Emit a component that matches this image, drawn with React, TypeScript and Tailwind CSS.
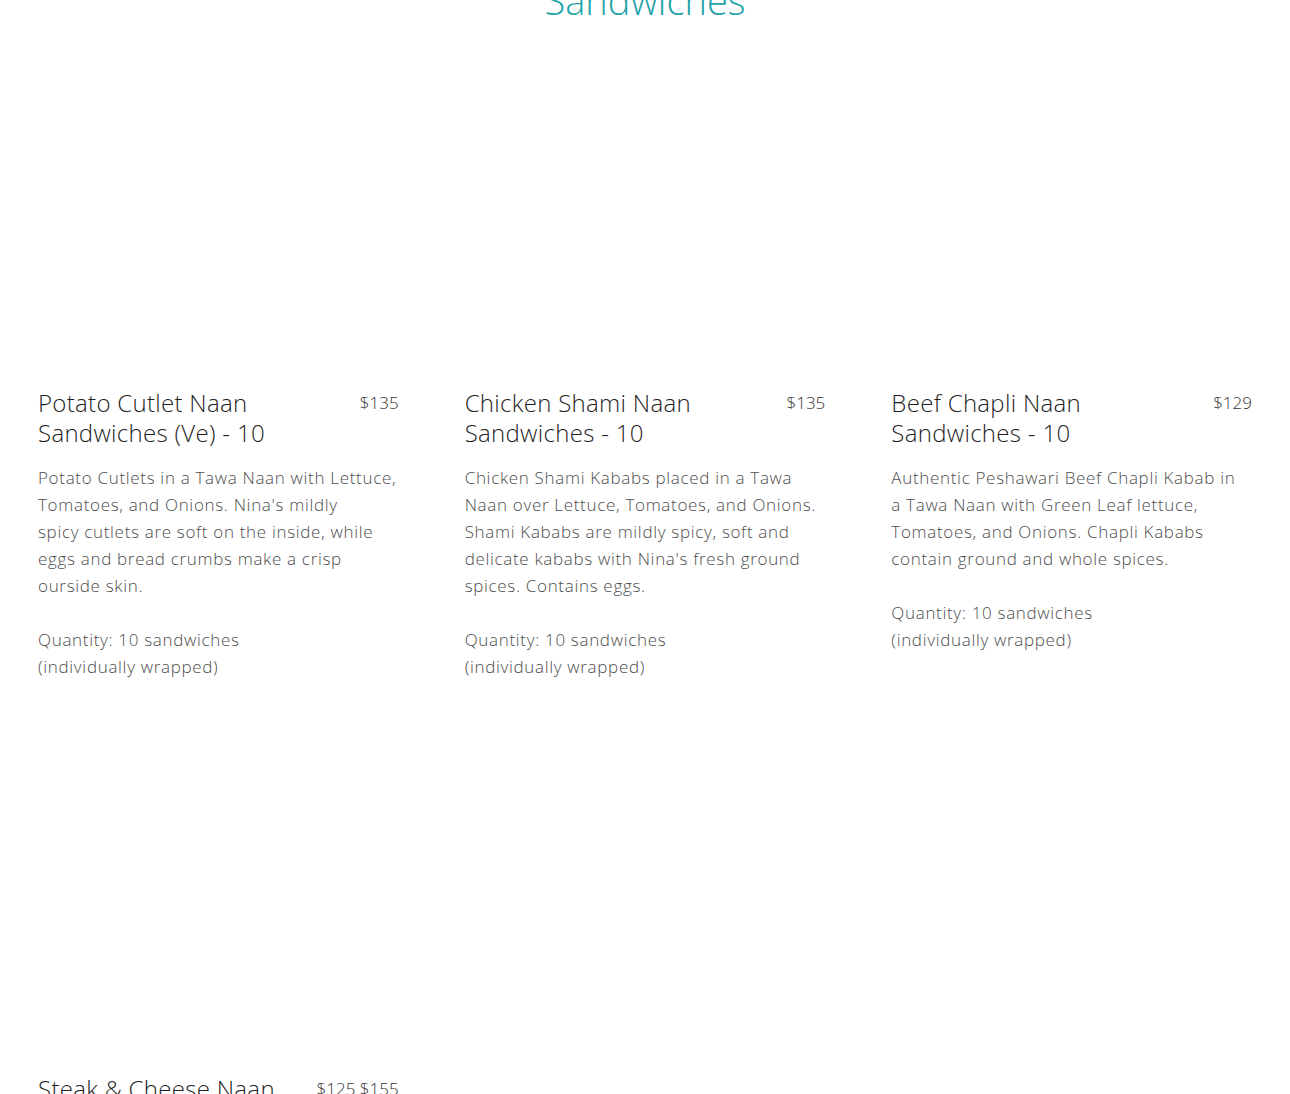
import React from "react";

type Item = { name: string[]; price: string; desc: string[]; qty: string[] };

const items: Item[] = [
  {
    name: ["Potato Cutlet Naan", "Sandwiches (Ve) - 10"],
    price: "$135",
    desc: [
      "Potato Cutlets in a Tawa Naan with Lettuce,",
      "Tomatoes, and Onions. Nina's mildly",
      "spicy cutlets are soft on the inside, while",
      "eggs and bread crumbs make a crisp",
      "ourside skin.",
    ],
    qty: ["Quantity: 10 sandwiches", "(individually wrapped)"],
  },
  {
    name: ["Chicken Shami Naan", "Sandwiches - 10"],
    price: "$135",
    desc: [
      "Chicken Shami Kababs placed in a Tawa",
      "Naan over Lettuce, Tomatoes, and Onions.",
      "Shami Kababs are mildly spicy, soft and",
      "delicate kababs with Nina's fresh ground",
      "spices. Contains eggs.",
    ],
    qty: ["Quantity: 10 sandwiches", "(individually wrapped)"],
  },
  {
    name: ["Beef Chapli Naan", "Sandwiches - 10"],
    price: "$129",
    desc: [
      "Authentic Peshawari Beef Chapli Kabab in",
      "a Tawa Naan with Green Leaf lettuce,",
      "Tomatoes, and Onions. Chapli Kababs",
      "contain ground and whole spices.",
    ],
    qty: ["Quantity: 10 sandwiches", "(individually wrapped)"],
  },
  {
    name: ["Steak & Cheese Naan", "Sandwiches - 10"],
    price: "$125 $155",
    desc: [],
    qty: [],
  },
];

const font = { fontFamily: "'Open Sans', Lato, sans-serif" };

function Card({ item }: { item: Item }) {
  return (
    <div className="flex flex-col">
      <div className="h-[340px] w-full bg-white" />
      <div className="mt-[20px] flex items-start justify-between gap-6">
        <h3 className="text-[24px] leading-[30px] font-light tracking-[0.3px] text-[#1f1f1f] whitespace-nowrap">
          {item.name.map((l, i) => (
            <div key={i}>{l}</div>
          ))}
        </h3>
        <div className="text-[17px] leading-[30px] font-light text-[#333333] whitespace-nowrap">{item.price}</div>
      </div>
      {item.desc.length > 0 && (
        <div className="mt-[16px] text-[17px] leading-[27px] font-light tracking-[0.68px] text-[#4d4d4d] whitespace-nowrap">
          {item.desc.map((l, i) => (
            <div key={i}>{l}</div>
          ))}
          <div>&nbsp;</div>
          {item.qty.map((l, i) => (
            <div key={i}>{l}</div>
          ))}
        </div>
      )}
    </div>
  );
}

export default function App() {
  return (
    <div className="h-[1094px] overflow-hidden bg-white" style={font}>
      <h2 className="mt-[-22px] text-center text-[38px] leading-[44px] font-light text-[#21a3a8]">Sandwiches</h2>
      <div className="mx-[38px] mt-[6px] grid grid-cols-3 gap-x-[66px] gap-y-[34px]">
        {items.map((it, i) => (
          <Card key={i} item={it} />
        ))}
      </div>
    </div>
  );
}
